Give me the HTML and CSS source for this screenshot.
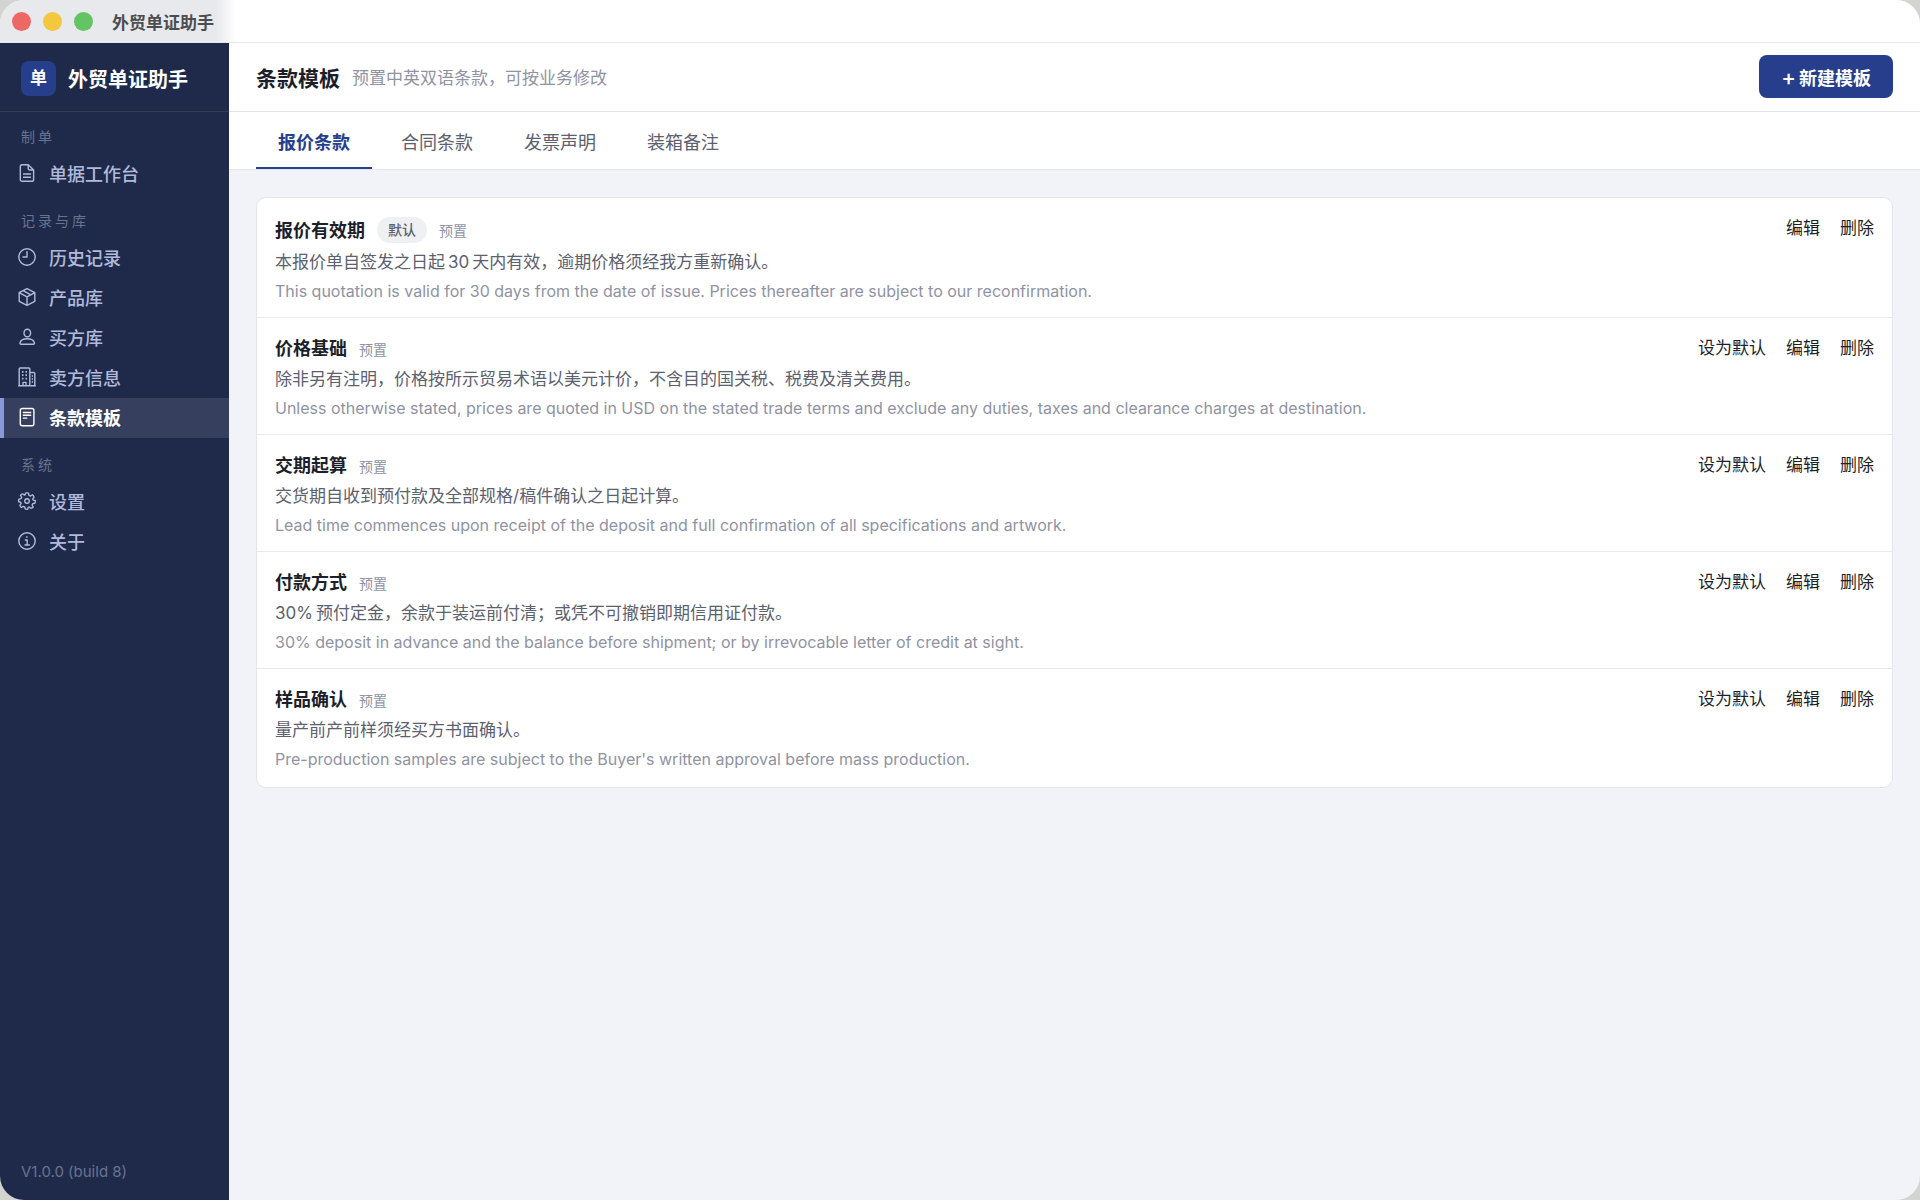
FILE: index.html
```html
<!DOCTYPE html>
<html lang="zh-CN">
<head>
    <meta charset="UTF-8">
    <title>外贸单证助手</title>
    <link rel="stylesheet" href="styles.css">
</head>
<body>
    <div class="window">
        <header class="titlebar">
            <span class="light red"></span>
            <span class="light yellow"></span>
            <span class="light green"></span>
            <span class="titlebar-text">外贸单证助手</span>
        </header>

        <div class="app">
            <!-- Sidebar -->
            <aside class="sidebar">
                <div class="brand">
                    <span class="brand-logo">单</span>
                    <span class="brand-name">外贸单证助手</span>
                </div>
                <nav class="nav">
                    <div class="nav-label">制单</div>
                    <a class="nav-item" href="#">
                        <svg class="icon" viewBox="0 0 18 18"><path d="M4.2.7h6l5.400 5.300v9.400a1.900 1.900 0 0 1-1.900 1.900H4.200a1.900 1.900 0 0 1-1.900-1.900V2.600A1.900 1.900 0 0 1 4.200.7zM10.200.9v3.300A1.700 1.700 0 0 0 11.900 6h3.500M5.500 10h7M5.500 13.200h7"/></svg>
                        单据工作台
                    </a>

                    <div class="nav-label">记录与库</div>
                    <a class="nav-item" href="#">
                        <svg class="icon" viewBox="0 0 18 18"><circle cx="9" cy="9" r="8.200"/><path d="M9 3.800V9H5"/></svg>
                        历史记录
                    </a>
                    <a class="nav-item" href="#">
                        <svg class="icon" viewBox="0 0 18 18"><path d="M9 .6l7.800 4.100v8.600L9 17.400l-7.800-4.100V4.700zM1.200 4.700L9 8.900l7.800-4.200M9 8.900v8.500M5.100 2.700l7.800 4.100"/></svg>
                        产品库
                    </a>
                    <a class="nav-item" href="#">
                        <svg class="icon" viewBox="0 0 18 18"><ellipse cx="9.300" cy="5" rx="3.300" ry="3.800"/><path d="M3.200 16.300c-1 0-1.400-.6-1.200-1.500.6-2.400 3.400-4 7.200-4s6.600 1.600 7.200 4c.2.9-.2 1.500-1.200 1.500z"/></svg>
                        买方库
                    </a>
                    <a class="nav-item" href="#">
                        <svg class="icon" viewBox="0 0 18 18"><path d="M1.200 17.400V1A1 1 0 0 1 2.200 0h8.600a1 1 0 0 1 1 1v16.400M11.800 4.500h4a1 1 0 0 1 1 1v11.900M.6 17.800h16.800M5 17.400v-3h3v3"/><path class="windows" d="M4 3.800h1.500M7.500 3.800H9M4 7.200h1.500M7.500 7.200H9M4 10.600h1.500M7.500 10.600H9M13.800 8h1M13.800 11h1M13.800 14h1"/></svg>
                        卖方信息
                    </a>
                    <a class="nav-item active" href="#">
                        <svg class="icon" viewBox="0 0 18 18"><rect x="2.300" y=".5" width="13.600" height="17.200" rx="2"/><path d="M5.300 4.500h7.400M5.300 7.300h7.400M5.300 10.100h3.500"/></svg>
                        条款模板
                    </a>

                    <div class="nav-label">系统</div>
                    <a class="nav-item" href="#">
                        <svg class="icon" viewBox="0 0 24 24"><circle cx="12" cy="12" r="3"/><path d="M10 1.500Q12 .9 14 1.500L14.600 4.500 16.700 5.400 19.300 3.700Q21 5 21.300 6.800L19.600 9.400 20.200 10.800 23 11.300Q23.400 13 22.500 15L19.600 15.600 18.800 17.400 20.300 20Q19 21.600 17.200 21.700L14.800 20 13.600 20.500 13 23Q11.200 23.400 9.600 22.600L9 20 6.900 19.200 4.400 20.700Q2.800 19.500 2.600 17.600L4.200 15.200 3.600 13.600 .9 13Q.5 11.200 1.300 9.500L4.200 8.800 4.900 7 3.300 4.600Q4.300 2.900 6.400 2.600L8.700 4.200 9.600 3.900z"/></svg>
                        设置
                    </a>
                    <a class="nav-item" href="#">
                        <svg class="icon" viewBox="0 0 18 18"><circle cx="9" cy="9" r="8.200"/><path d="M7.300 8h1.900v5M7 13h4.300M8.900 4.700v.6"/></svg>
                        关于
                    </a>
                </nav>
                <div class="version">V1.0.0 (build 8)</div>
            </aside>

            <main class="main">
                <div class="page-header">
                    <h1>条款模板</h1>
                    <span class="subtitle">预置中英双语条款，可按业务修改</span>
                    <button class="btn-primary"><span class="plus">+</span>新建模板</button>
                </div>

                <div class="tabs">
                    <button class="tab active">报价条款</button>
                    <button class="tab">合同条款</button>
                    <button class="tab">发票声明</button>
                    <button class="tab">装箱备注</button>
                </div>

                <!-- Template list -->
                <div class="card">
                    <div class="row">
                        <div class="row-body">
                            <div class="row-title"><h2>报价有效期</h2><span class="badge">默认</span><span class="preset">预置</span></div>
                            <p class="zh">本报价单自签发之日起<span class="num">30</span>天内有效，逾期价格须经我方重新确认。</p>
                            <p class="en">This quotation is valid for 30 days from the date of issue. Prices thereafter are subject to our reconfirmation.</p>
                        </div>
                        <div class="actions"><button>编辑</button><button>删除</button></div>
                    </div>
                    <div class="row">
                        <div class="row-body">
                            <div class="row-title"><h2>价格基础</h2><span class="preset">预置</span></div>
                            <p class="zh">除非另有注明，价格按所示贸易术语以美元计价，不含目的国关税、税费及清关费用。</p>
                            <p class="en">Unless otherwise stated, prices are quoted in USD on the stated trade terms and exclude any duties, taxes and clearance charges at destination.</p>
                        </div>
                        <div class="actions"><button>设为默认</button><button>编辑</button><button>删除</button></div>
                    </div>
                    <div class="row">
                        <div class="row-body">
                            <div class="row-title"><h2>交期起算</h2><span class="preset">预置</span></div>
                            <p class="zh">交货期自收到预付款及全部规格/稿件确认之日起计算。</p>
                            <p class="en">Lead time commences upon receipt of the deposit and full confirmation of all specifications and artwork.</p>
                        </div>
                        <div class="actions"><button>设为默认</button><button>编辑</button><button>删除</button></div>
                    </div>
                    <div class="row">
                        <div class="row-body">
                            <div class="row-title"><h2>付款方式</h2><span class="preset">预置</span></div>
                            <p class="zh"><span class="num-start">30%</span>预付定金，余款于装运前付清；或凭不可撤销即期信用证付款。</p>
                            <p class="en">30% deposit in advance and the balance before shipment; or by irrevocable letter of credit at sight.</p>
                        </div>
                        <div class="actions"><button>设为默认</button><button>编辑</button><button>删除</button></div>
                    </div>
                    <div class="row">
                        <div class="row-body">
                            <div class="row-title"><h2>样品确认</h2><span class="preset">预置</span></div>
                            <p class="zh">量产前产前样须经买方书面确认。</p>
                            <p class="en">Pre-production samples are subject to the Buyer's written approval before mass production.</p>
                        </div>
                        <div class="actions"><button>设为默认</button><button>编辑</button><button>删除</button></div>
                    </div>
                </div>
            </main>
        </div>
    </div>
</body>
</html>
```

FILE: styles.css
```css
* {
    box-sizing: border-box;
}
body {
    margin: 0;
    background-color: #d3d4d0;
    font-family: Inter, "Noto Sans CJK SC", sans-serif;
    color: #1c1f2b;
}
h1, h2, p {
    margin: 0;
}
button {
    font-family: inherit;
    color: inherit;
    background: none;
    border: none;
    padding: 0;
    cursor: pointer;
}
.window {
    display: flex;
    flex-direction: column;
    min-height: 100vh;
    border-radius: 24px;
    overflow: hidden;
    background-color: #f2f3f8;
}

/* Title bar */
.titlebar {
    display: flex;
    align-items: center;
    gap: 12px;
    height: 43px;
    padding-left: 12px;
    background: linear-gradient(to right, #e8e9ec 216px, #fff 236px);
    border-bottom: 1px solid #e6e7ea;
}
.light {
    width: 19px;
    height: 19px;
    border-radius: 50%;
}
.red {
    background-color: #ed6764;
}
.yellow {
    background-color: #f3c83f;
}
.green {
    background-color: #62c462;
}
.titlebar-text {
    margin-left: 7px;
    font-size: 17px;
    font-weight: 600;
    color: #4c4d50;
}

.app {
    display: flex;
    flex: 1;
}

/* Sidebar */
.sidebar {
    display: flex;
    flex-direction: column;
    flex-shrink: 0;
    width: 229px;
    background-color: #1f2a4a;
}
.brand {
    display: flex;
    align-items: center;
    gap: 12px;
    height: 69px;
    padding: 2px 21px 0;
    border-bottom: 1px solid #333d5a;
    color: #fff;
}
.brand-logo {
    width: 35px;
    height: 35px;
    border-radius: 8px;
    background-color: #263e8c;
    font-size: 17px;
    font-weight: 700;
    line-height: 35px;
    text-align: center;
}
.brand-name {
    font-size: 20px;
    font-weight: 600;
    white-space: nowrap;
}
.nav {
    flex: 1;
}
.nav-label {
    padding: 16px 21px 7px;
    font-size: 14px;
    line-height: 21px;
    letter-spacing: 3px;
    color: #69728f;
}
.nav-label:first-child {
    padding-top: 14px;
}
.nav-item {
    display: flex;
    align-items: center;
    gap: 13px;
    height: 40px;
    padding: 0 0 2px 14px;
    border-left: 4px solid transparent;
    font-size: 18px;
    font-weight: 500;
    color: #b1badb;
    text-decoration: none;
}
.nav-item.active {
    background-color: #363f5d;
    border-left-color: #8799db;
    font-weight: 600;
    color: #fff;
}
.icon {
    width: 18px;
    height: 18px;
    overflow: visible;
    fill: none;
    stroke: currentColor;
    stroke-width: 1.4;
    stroke-linejoin: round;
    stroke-linecap: round;
}
.icon[viewBox="0 0 24 24"] {
    stroke-width: 1.8;
}
.windows {
    stroke-linecap: butt;
    stroke-width: 1.8;
}
.version {
    padding: 17px 21px;
    font-size: 15px;
    line-height: 22px;
    color: #69728f;
}

/* Main area */
.main {
    flex: 1;
    min-width: 0;
}
.page-header {
    display: flex;
    align-items: center;
    gap: 12px;
    height: 69px;
    padding: 0 27px 1px;
    background-color: #fff;
    border-bottom: 1px solid #e0e3ea;
}
h1 {
    font-size: 21px;
    font-weight: 700;
}
.subtitle {
    font-size: 17px;
    color: #8f93a3;
}
.btn-primary {
    display: flex;
    align-items: center;
    justify-content: center;
    gap: 3px;
    height: 43px;
    margin-left: auto;
    padding: 0 22px;
    border-radius: 8px;
    background-color: #263e8c;
    font-size: 18px;
    font-weight: 600;
    color: #fff;
}
.plus {
    font-size: 22px;
    line-height: 22px;
    font-weight: 500;
}
.tabs {
    display: flex;
    gap: 7px;
    height: 58px;
    padding: 0 27px;
    background-color: #fff;
    border-bottom: 1px solid #e3e5ea;
}
.tab {
    padding: 2px 22px 0;
    border-bottom: 2px solid transparent;
    font-size: 18px;
    color: #5c6170;
}
.tab.active {
    border-bottom-color: #263e8c;
    font-weight: 600;
    color: #263e8c;
}

.card {
    margin: 27px;
    border: 1px solid #e3e5ea;
    border-radius: 10px;
    background-color: #fff;
}
.row {
    display: flex;
    justify-content: space-between;
    padding: 19px 18px 12px;
    border-bottom: 1px solid #e8eaee;
}
.row:last-child {
    padding-bottom: 14px;
    border-bottom: none;
}
.row-title {
    display: flex;
    align-items: center;
    gap: 12px;
    margin-bottom: 5px;
}
h2 {
    font-size: 18px;
    font-weight: 600;
    line-height: 23px;
}
.badge {
    padding: 0 11px;
    border-radius: 13px;
    background-color: #eff0f4;
    font-size: 14px;
    font-weight: 500;
    line-height: 26px;
    color: #5c6170;
}
.preset {
    font-size: 14px;
    color: #8f93a3;
}
.zh {
    font-size: 17px;
    line-height: 29px;
    color: #5c6170;
}
.num {
    margin: 0 3px;
}
.num-start {
    margin-right: 3px;
}
.en {
    font-size: 16px;
    line-height: 28px;
    color: #8f93a3;
}
.actions {
    display: flex;
    align-items: flex-start;
    gap: 20px;
}
.actions button {
    font-size: 17px;
    line-height: 23px;
}
```
